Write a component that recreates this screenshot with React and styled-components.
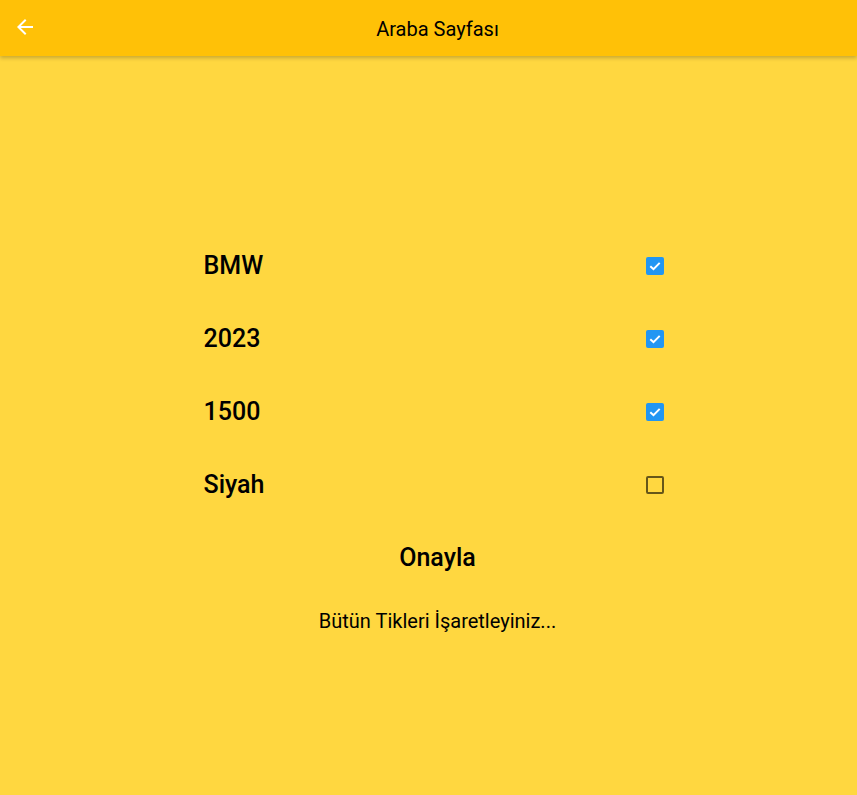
import React, { useState } from 'react'
import styled, { createGlobalStyle } from 'styled-components'

const GlobalStyle = createGlobalStyle`
  html, body {
    margin: 0;
    padding: 0;
    background: #FFD740;
    font-family: Roboto, "Noto Sans", sans-serif;
  }
`;

const Page = styled.div`
  width: 100%;
  min-height: 795px;
  background: #FFD740;
  display: flex;
  flex-direction: column;
`;

const AppBar = styled.header`
  height: 56px;
  background: #FFC107;
  display: flex;
  align-items: center;
  justify-content: center;
  position: relative;
  box-shadow: 0 2px 4px rgba(0, 0, 0, 0.22);
  z-index: 1;
`;

const BackButton = styled.button`
  position: absolute;
  left: 13px;
  top: 15px;
  width: 24px;
  height: 24px;
  padding: 0;
  border: 0;
  background: none;
  display: flex;
`;

const Title = styled.h1`
  margin: 0;
  font-size: 20px;
  font-weight: 400;
  color: #000;
  padding: 1px 0 0 18px;
`;

const Content = styled.main`
  display: flex;
  flex-direction: column;
  align-items: center;
  padding: 173px 0 0 18px;
`;

const List = styled.div`
  width: 484px;
  display: flex;
  flex-direction: column;
`;

const Row = styled.label`
  height: 73px;
  display: flex;
  align-items: center;
  justify-content: space-between;
  padding: 0 16px 0 8px;
  cursor: pointer;
`;

const RowText = styled.span`
  font-size: 25px;
  font-weight: 500;
  color: #000;
`;

const Box = styled.span`
  width: 18px;
  height: 18px;
  box-sizing: border-box;
  border-radius: 2px;
  display: flex;
  align-items: center;
  justify-content: center;
  background: ${p => (p.$on ? '#2196F3' : 'transparent')};
  border: ${p => (p.$on ? 'none' : '2px solid rgba(0,0,0,0.6)')};
`;

const Confirm = styled.button`
  height: 73px;
  border: 0;
  background: none;
  font-family: Roboto, sans-serif;
  font-size: 25px;
  font-weight: 500;
  color: #000;
  padding: 0 16px;
  cursor: pointer;
`;

const Hint = styled.p`
  margin: 14px 0 0;
  font-size: 20px;
  color: #000;
  line-height: 26px;
`;

const Checkbox = ({ checked }) => (
  <Box $on={checked}>
    {checked && (
      <svg width="14" height="14" viewBox="0 0 14 14">
        <path d="M2.3 7.2 L5.5 10.2 L11.7 3.9" fill="none" stroke="#fff" strokeWidth="2" />
      </svg>
    )}
  </Box>
);

const items = [
  { label: 'BMW', on: true },
  { label: '2023', on: true },
  { label: '1500', on: true },
  { label: 'Siyah', on: false },
];

export default function App() {
  const [checks, setChecks] = useState(items.map(i => i.on));
  const toggle = idx => setChecks(c => c.map((v, i) => (i === idx ? !v : v)));

  return (
    <Page>
      <GlobalStyle />
      <AppBar>
        <BackButton aria-label="back">
          <svg width="24" height="24" viewBox="0 0 24 24">
            <path fill="#fff" d="M20 11H7.83l5.59-5.59L12 4l-8 8 8 8 1.41-1.41L7.83 13H20v-2z" />
          </svg>
        </BackButton>
        <Title>Araba Sayfası</Title>
      </AppBar>
      <Content>
        <List>
          {items.map((it, i) => (
            <Row key={it.label} onClick={() => toggle(i)}>
              <RowText>{it.label}</RowText>
              <Checkbox checked={checks[i]} />
            </Row>
          ))}
        </List>
        <Confirm>Onayla</Confirm>
        <Hint>Bütün Tikleri İşaretleyiniz...</Hint>
      </Content>
    </Page>
  )
}
